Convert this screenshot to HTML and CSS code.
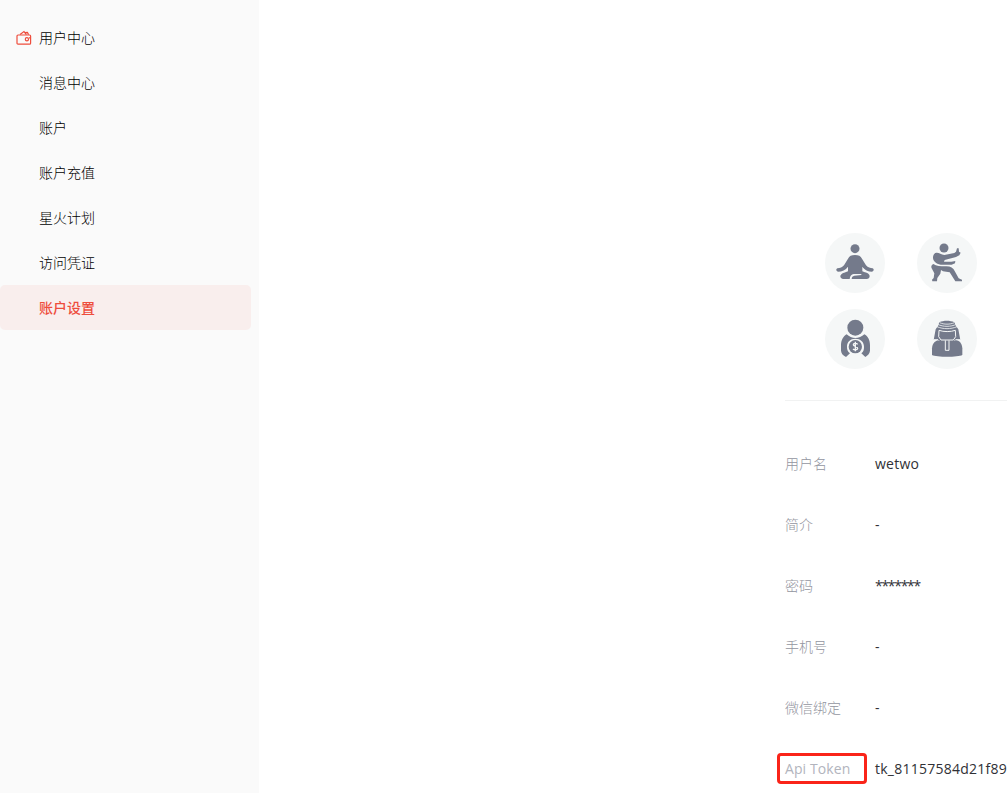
FILE: index.html
```
<!DOCTYPE html>
<html lang="zh-CN">
  <head>
    <meta charset="UTF-8" />
    <meta name="viewport" content="width=device-width, initial-scale=1.0" />
    <title>账户设置</title>
    <link rel="stylesheet" href="styles.css">
  </head>
  <body>
    <div id="wrap">
      <aside>
        <ul class="menu">
          <li>
            <a href="#user">
              <svg class="menu-icon" viewBox="0 0 16 16">
                <rect x="1" y="5" width="13.6" height="9.2" rx="1" />
                <path d="M4 4.6L8 1.6L10.4 4.6M8.8 2.6L11.4 2.4L12.6 4.6" />
                <path d="M14.4 7.8H13" />
                <circle cx="10.9" cy="9.2" r="1.6" />
              </svg>
              用户中心
            </a>
          </li>
          <li><a href="#message">消息中心</a></li>
          <li><a href="#account">账户</a></li>
          <li><a href="#recharge">账户充值</a></li>
          <li><a href="#spark">星火计划</a></li>
          <li><a href="#credential">访问凭证</a></li>
          <li><a href="#settings" class="active">账户设置</a></li>
        </ul>
      </aside>
      <section>
        <div class="avatars">
          <!-- 打坐 -->
          <svg class="avatar" viewBox="15 15 180 180">
            <circle cx="105" cy="62" r="13.5" />
            <path d="M105 81C116 81 122 84 126 92L138 112C144 119 151 120 158 121C163 123 162 130 156 131C145 131 136 127 130 120L127 116V130C137 134 148 136 149 144C149 150 145 153 140 153H95C95 147 98 144 103 143L124 141V138H101C94 139 90 144 89 153H70C64 153 61 149 61 145C62 136 74 134 84 130V116C77 126 66 131 54 131C48 130 47 123 52 121C60 120 67 118 72 112L84 92C88 84 94 81 105 81Z" />
          </svg>
          <!-- 太极 -->
          <svg class="avatar" viewBox="15 15 180 180">
            <circle cx="96" cy="60" r="13.5" />
            <path d="M73 74C81 73 87 80 97 81L127 75L132 71L135 61H140L141 71L146 74L142 82L132 87L98 96L96 101H118L130 99L129 106L119 110H86C71 108 62 98 63 87C64 79 68 75 73 74Z" />
            <path d="M64 108C73 114 86 115 100 115C114 114 124 119 128 129L140 151L150 155V160H130L113 133L93 130L87 126L85 137L76 150L75 160H61L60 155L65 150L67 136L59 121C56 115 59 110 64 108Z" />
          </svg>
          <!-- 理财 -->
          <svg class="avatar" viewBox="15 15 180 180">
            <circle cx="106" cy="71" r="24" />
            <path d="M80 91C87 98 97 102 106 102S126 98 133 91C144 97 150 109 150 123V140C149 149 143 154 136 159L124 148C131 142 132 137 132 128C132 113 121 104 106 104S81 113 81 128C81 137 83 142 90 148L78 159C69 154 64 149 63 140V123C63 109 70 97 80 91Z" />
            <circle cx="106" cy="128" r="20" />
            <path class="line dollar" d="M113 121C110 117 100 117 100 122C100 128 113 126 113 133C113 138 103 139 99 135M106 113V142" />
          </svg>
          <!-- 头巾 -->
          <svg class="avatar" viewBox="15 15 180 180">
            <path d="M78 66L82 55C95 49 114 49 127 55L132 66L139 76L145 108H65L71 76Z" />
            <path d="M60 133C61 117 71 109 81 108H130C143 109 150 119 151 133V153C138 160 73 160 60 153Z" />
            <path class="line stripe" d="M75 68C94 76 116 76 135 68M77 61C94 69 116 69 133 61M83 56C96 62 114 62 127 56" />
            <path class="line" d="M64 107H78L81 110M146 107H131L128 110M81 79C95 84 116 84 130 79L131 98L124 108H87L80 98ZM100 109V139H111V109" />
          </svg>
        </div>
        <dl class="info">
          <div class="row">
            <dt>用户名</dt>
            <dd>wetwo</dd>
          </div>
          <div class="row">
            <dt>简介</dt>
            <dd>-</dd>
          </div>
          <div class="row">
            <dt>密码</dt>
            <dd class="password">*******</dd>
          </div>
          <div class="row">
            <dt>手机号</dt>
            <dd>-</dd>
          </div>
          <div class="row">
            <dt>微信绑定</dt>
            <dd>-</dd>
          </div>
          <div class="row">
            <dt class="marked">Api Token</dt>
            <dd>tk_81157584d21f89</dd>
          </div>
        </dl>
      </section>
    </div>
  </body>
</html>
```
FILE: styles.css
```
*,
*::after {
  margin: 0;
  padding: 0;
  box-sizing: border-box;
}

body {
  height: 100vh;
  overflow: hidden;
  font-family: 'Open Sans', 'Noto Sans CJK SC', sans-serif;
  font-size: 14px;
  color: #303136;
  background-color: #fff;
}

li {
  list-style: none;
}

a {
  text-decoration: none;
}

#wrap {
  display: flex;
  height: 100%;
}

/* 侧边菜单 */
aside {
  flex: none;
  width: 259px;
  padding: 15px 8px 0 0;
  background-color: #fafafa;
}

.menu a {
  display: flex;
  align-items: center;
  height: 45px;
  padding-left: 39px;
  font-weight: 300;
  line-height: 20px;
  color: #000;
}

.menu a.active {
  font-weight: 500;
  color: #ee4d3d;
  background-color: #f9eeed;
  border-radius: 5px;
}

.menu-icon {
  width: 16px;
  height: 16px;
  margin: 0 7px 0 -23px;
  fill: none;
  stroke: #ee4d3d;
  stroke-width: 1.2;
}

/* 账户设置 */
section {
  flex: 1;
  padding: 233px 0 0 526px;
}

.avatars {
  display: grid;
  grid-template-columns: 60px 60px;
  gap: 16px 32px;
  height: 168px;
  padding-left: 40px;
  align-content: start;
  border-bottom: 1px solid #f1f2f2;
}

.avatar {
  width: 60px;
  height: 60px;
  border-radius: 50%;
  background-color: #f5f7f7;
  fill: #747a8b;
}

.avatar .line {
  fill: none;
  stroke: #f5f7f7;
  stroke-width: 3;
}

.avatar .stripe {
  stroke-width: 2.4;
}

.avatar .dollar {
  stroke-width: 4;
}

.info {
  padding-top: 32px;
}

.row {
  display: flex;
  align-items: center;
  height: 61px;
  line-height: 20px;
}

dt {
  flex: none;
  width: 90px;
  font-weight: 300;
  color: #9395a0;
}

dd {
  letter-spacing: 0.25px;
  white-space: nowrap;
}

.password {
  letter-spacing: -1.3px;
}

.marked {
  position: relative;
  font-weight: 400;
  letter-spacing: 0.1px;
  color: #b2b4bd;
}

.marked::after {
  content: '';
  position: absolute;
  top: -6px;
  left: -8px;
  width: 90px;
  height: 31px;
  border: 3px solid #fa2419;
  border-radius: 4px;
}
```
